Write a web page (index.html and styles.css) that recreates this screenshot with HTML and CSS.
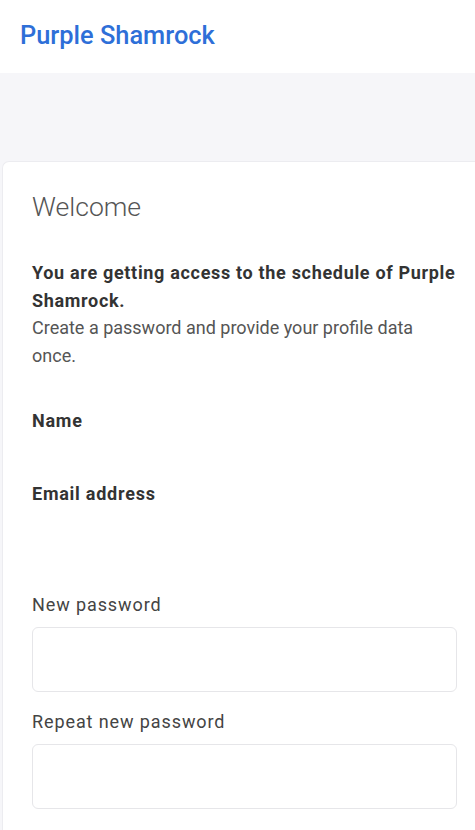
FILE: index.html
```html
<!DOCTYPE html>
<html lang="en">
<head>
<meta charset="utf-8">
<title>Purple Shamrock</title>
<link rel="stylesheet" href="styles.css">
</head>
<body>
<header class="topbar">
  <a class="brand" href="#">Purple Shamrock</a>
</header>
<main class="page">
  <section class="card">
    <h1 class="title">Welcome</h1>
    <p class="intro"><strong>You are getting access to the schedule of Purple Shamrock.</strong><br>Create a password and provide your profile data once.</p>
    <div class="field-static field-name">Name</div>
    <div class="field-static field-email">Email address</div>
    <div class="field field-first">
      <label class="label" for="pw1">New password</label>
      <input class="input" id="pw1" type="password">
    </div>
    <div class="field field-second">
      <label class="label" for="pw2">Repeat new password</label>
      <input class="input" id="pw2" type="password">
    </div>
  </section>
</main>
</body>
</html>
```

FILE: styles.css
```css
* { box-sizing: border-box; }
html, body { margin: 0; padding: 0; }
body {
  font-family: Roboto, "Liberation Sans", Arial, sans-serif;
  background: #f6f6f9;
  color: #333;
  width: 475px;
  height: 830px;
  overflow: hidden;
}
.topbar {
  height: 73px;
  background: #fff;
  display: flex;
  align-items: center;
  padding-left: 20px;
  padding-bottom: 3px;
}
.brand {
  color: #2e6fd8;
  text-decoration: none;
  font-size: 25.4px;
  font-weight: 500;
}
.page {
  padding-top: 88px;
  padding-left: 2px;
}
.card {
  background: #fff;
  border: 1px solid #ececf0;
  border-right: none;
  border-radius: 7px 0 0 7px;
  padding: 29px 0 30px 29px;
  width: 473px;
  min-height: 700px;
}
.title {
  margin: 0;
  font-size: 26.6px;
  font-weight: 300;
  color: #555;
  line-height: 32px;
}
.intro {
  margin: 36px 0 0;
  width: 425px;
  font-size: 18px;
  line-height: 27.7px;
  color: #555;
}
.intro strong {
  color: #333;
  font-weight: 700;
  letter-spacing: 0.68px;
}
.field-static {
  font-size: 18px;
  font-weight: 700;
  letter-spacing: 0.75px;
  color: #333;
  line-height: 30px;
}
.field-name { margin-top: 36px; }
.field-email { margin-top: 43px; }
.field { width: 425px; }
.field-first { margin-top: 84px; }
.field-second { margin-top: 18px; }
.label {
  display: block;
  font-size: 18px;
  letter-spacing: 0.9px;
  color: #444;
  line-height: 24px;
  margin-bottom: 10px;
}
.input {
  display: block;
  width: 100%;
  height: 65px;
  border: 1px solid #e6e6e9;
  border-radius: 6px;
  background: #fff;
  outline: none;
}
```
